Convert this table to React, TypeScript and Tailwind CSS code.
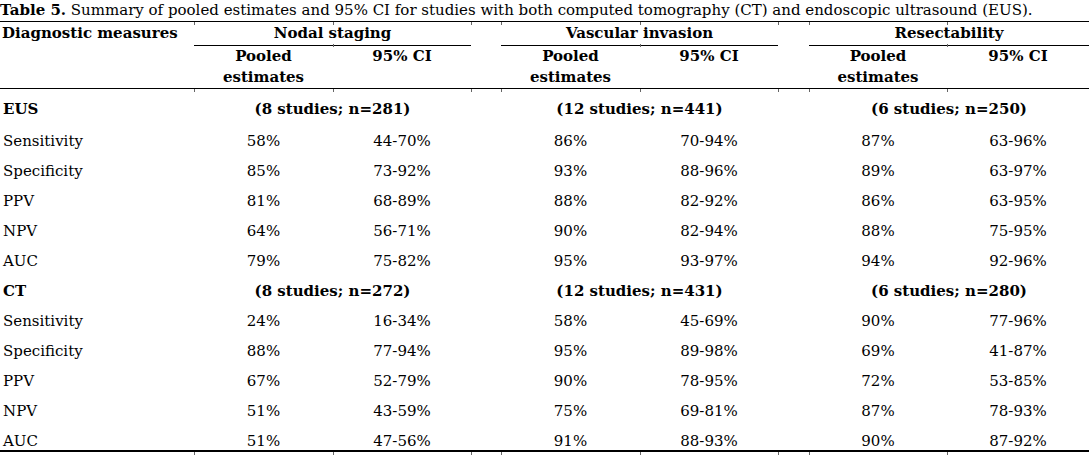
const cols =
  'grid grid-cols-[194px_139px_138px_30px_139px_138px_31px_138px_142px]';

type Pair = [string, string];
type Row = { label: string; values: [Pair, Pair, Pair] };
type Block = { name: string; studies: [string, string, string]; rows: Row[] };

const blocks: Block[] = [
  {
    name: 'EUS',
    studies: ['(8 studies; n=281)', '(12 studies; n=441)', '(6 studies; n=250)'],
    rows: [
      { label: 'Sensitivity', values: [['58%', '44-70%'], ['86%', '70-94%'], ['87%', '63-96%']] },
      { label: 'Specificity', values: [['85%', '73-92%'], ['93%', '88-96%'], ['89%', '63-97%']] },
      { label: 'PPV', values: [['81%', '68-89%'], ['88%', '82-92%'], ['86%', '63-95%']] },
      { label: 'NPV', values: [['64%', '56-71%'], ['90%', '82-94%'], ['88%', '75-95%']] },
      { label: 'AUC', values: [['79%', '75-82%'], ['95%', '93-97%'], ['94%', '92-96%']] },
    ],
  },
  {
    name: 'CT',
    studies: ['(8 studies; n=272)', '(12 studies; n=431)', '(6 studies; n=280)'],
    rows: [
      { label: 'Sensitivity', values: [['24%', '16-34%'], ['58%', '45-69%'], ['90%', '77-96%']] },
      { label: 'Specificity', values: [['88%', '77-94%'], ['95%', '89-98%'], ['69%', '41-87%']] },
      { label: 'PPV', values: [['67%', '52-79%'], ['90%', '78-95%'], ['72%', '53-85%']] },
      { label: 'NPV', values: [['51%', '43-59%'], ['75%', '69-81%'], ['87%', '78-93%']] },
      { label: 'AUC', values: [['51%', '47-56%'], ['91%', '88-93%'], ['90%', '87-92%']] },
    ],
  },
];

const groups = ['Nodal staging', 'Vascular invasion', 'Resectability'];

// little cell-border stubs that hang under the rules
function Ticks({ mid }: { mid?: boolean }) {
  return (
    <div className={`${cols} h-[3px] -mb-[3px]`}>
      <div />
      <div className={mid ? '' : 'border-l border-[#666]'} />
      <div className="border-l border-[#666]" />
      <div className={mid ? '' : 'border-l border-[#666]'} />
      <div className={mid ? '' : 'border-l border-[#666]'} />
      <div className="border-l border-[#666]" />
      <div className={mid ? '' : 'border-l border-[#666]'} />
      <div className={mid ? '' : 'border-l border-[#666]'} />
      <div className="border-l border-[#666]" />
    </div>
  );
}

function Rule() {
  return <div className="h-[1.5px] bg-black" />;
}

function DataRow({ row, last }: { row: Row; last: boolean }) {
  return (
    <div className={`${cols} ${last ? 'h-[24px]' : 'h-[30px]'} leading-[30px]`}>
      <div className="pl-[3px]">{row.label}</div>
      <div className="text-center">{row.values[0][0]}</div>
      <div className="text-center">{row.values[0][1]}</div>
      <div />
      <div className="text-center">{row.values[1][0]}</div>
      <div className="text-center">{row.values[1][1]}</div>
      <div />
      <div className="text-center">{row.values[2][0]}</div>
      <div className="text-center">{row.values[2][1]}</div>
    </div>
  );
}

export default function App() {
  return (
    <div className="w-[1089px] h-[461px] bg-white text-black text-[15px] font-['DejaVu_Serif',serif]">
      {/* Caption */}
      <div className="h-[20.5px] leading-[20px] whitespace-nowrap">
        <b>Table 5.</b> Summary of pooled estimates and 95% CI for studies with both computed
        tomography (CT) and endoscopic ultrasound (EUS).
      </div>
      <Rule />
      <Ticks />

      {/* Header */}
      <div className="font-bold">
        <div className={`${cols} h-[22px] leading-[23px]`}>
          <div className="pl-[2px]">Diagnostic measures</div>
          <div className="col-span-2 text-center border-b-[1.5px] border-black">{groups[0]}</div>
          <div />
          <div className="col-span-2 text-center border-b-[1.5px] border-black">{groups[1]}</div>
          <div />
          <div className="col-span-2 text-center border-b-[1.5px] border-black">{groups[2]}</div>
        </div>
        <Ticks mid />
        <div className={`${cols} h-[43.5px] leading-[21px] pt-[2px]`}>
          <div />
          <div className="text-center">Pooled<br />estimates</div>
          <div className="text-center">95% CI</div>
          <div />
          <div className="text-center">Pooled<br />estimates</div>
          <div className="text-center">95% CI</div>
          <div />
          <div className="text-center">Pooled<br />estimates</div>
          <div className="text-center">95% CI</div>
        </div>
      </div>
      <Rule />
      <Ticks />

      {/* Body */}
      {blocks.map((block, b) => (
        <div key={block.name}>
          <div className={`${cols} ${b === 0 ? 'h-[37px] pt-[5px]' : 'h-[30px]'} leading-[30px] font-bold`}>
            <div className="pl-[3px]">{block.name}</div>
            <div className="col-span-2 text-center">{block.studies[0]}</div>
            <div />
            <div className="col-span-2 text-center">{block.studies[1]}</div>
            <div />
            <div className="col-span-2 text-center">{block.studies[2]}</div>
          </div>
          {block.rows.map((row, r) => (
            <DataRow key={row.label} row={row} last={b === 1 && r === block.rows.length - 1} />
          ))}
        </div>
      ))}
      <Rule />
      <Ticks />
    </div>
  );
}
